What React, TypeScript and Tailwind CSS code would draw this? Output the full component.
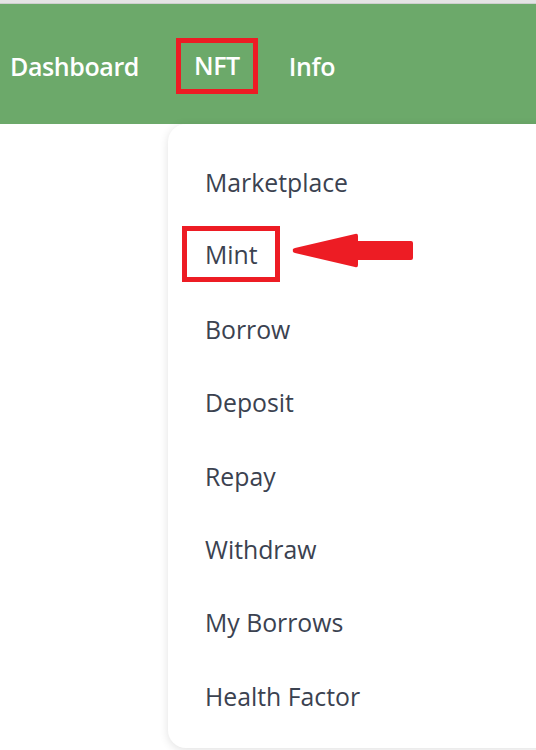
import React from "react";

const menuItems = [
  "Marketplace",
  "Mint",
  "Borrow",
  "Deposit",
  "Repay",
  "Withdraw",
  "My Borrows",
  "Health Factor",
];

// Red arrow pointing at the highlighted item
const PointerArrow = () => (
  <svg width="124" height="40" viewBox="0 0 124 40" className="absolute left-[291px] top-[231px]">
    <path
      d="M2 19 Q1 18 4 17 L64 3 Q67 2 67 5 L67 10 L120 10 Q122 10 122 12 L122 27 Q122 29 120 29 L67 29 L67 34 Q67 37 64 36 L4 22 Q1 21 2 19 Z"
      fill="#ed1c24"
    />
  </svg>
);

export default function App() {
  return (
    <div
      className="relative w-[536px] h-[750px] overflow-hidden bg-white"
      style={{ fontFamily: '"Open Sans", "Noto Sans", sans-serif' }}
    >
      <div className="h-[4px] bg-[#e4e4e4] border-b border-[#cfcfcf]" />
      <nav className="h-[120px] bg-[#6ca96a] flex items-center pl-[10px] pt-[6px] text-white font-semibold text-[25px] tracking-[-0.4px]">
        <span className="mr-[37px]">Dashboard</span>
        <span className="border-[5px] border-[#ed1c24] px-[13px] h-[56px] -mt-[2px] flex items-center mr-[31px]">
          NFT
        </span>
        <span>Info</span>
      </nav>

      {/* Dropdown */}
      <div className="absolute left-[168px] top-[124px] w-[400px] h-[624px] bg-white rounded-[18px] shadow-[0_2px_10px_rgba(0,0,0,0.12)] pt-[40px]">
        <ul className="flex flex-col">
          {menuItems.map((item) => (
            <li key={item} className="h-[73.4px] pl-[37px] text-[24.8px] text-[#3b4250] flex items-start">
              {item === "Mint" ? (
                <span className="-ml-[23px] -mt-[11px] border-[5px] border-[#ed1c24] h-[56px] w-[98px] pl-[18px] flex items-center">
                  {item}
                </span>
              ) : (
                <span className="leading-[36px]">{item}</span>
              )}
            </li>
          ))}
        </ul>
      </div>

      <PointerArrow />
    </div>
  );
}
